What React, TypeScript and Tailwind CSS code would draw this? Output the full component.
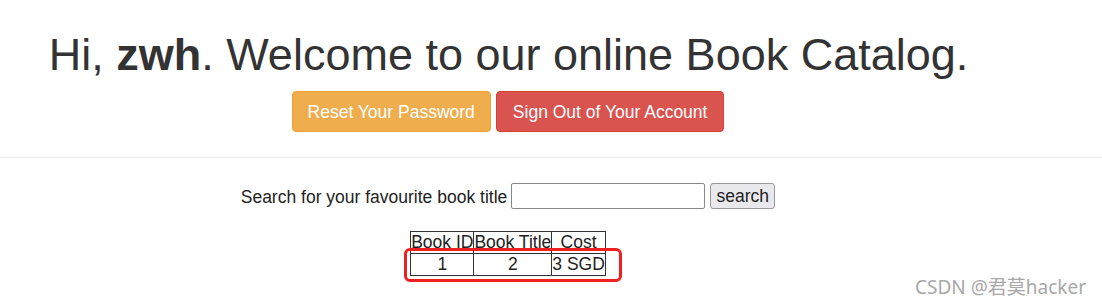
export default function App() {
  return (
    <div className="relative w-[1102px] h-[305px] bg-white overflow-hidden text-[#333] font-['Liberation_Sans',Arial,sans-serif]">
      {/* Header */}
      <div className="w-[1016px] flex flex-col items-center pt-[27px]">
        <h1 className="text-[45px] leading-[56px] pl-[1px]">
          Hi, <b>zwh</b>. Welcome to our online Book Catalog.
        </h1>
        <div className="flex gap-[5px] mt-[8px]">
          <button className="h-[41px] px-[15px] pt-[2px] rounded-[4px] border border-[#eea236] bg-[#f0ad4e] text-white text-[17.5px]">
            Reset Your Password
          </button>
          <button className="h-[41px] px-[16px] pt-[2px] rounded-[4px] border border-[#d43f3a] bg-[#d9534f] text-white text-[17.5px]">
            Sign Out of Your Account
          </button>
        </div>
      </div>
      <div className="mt-[25px] border-t border-[#eee]" />

      {/* Search */}
      <div className="w-[1016px] h-[26px] flex justify-center items-center mt-[25px] text-[17.5px] text-[#222]">
        <span className="mr-[4px] leading-[26px] pt-[2px]">Search for your favourite book title</span>
        <input className="w-[194px] h-[26px] border border-[#888] rounded-[2px] bg-white" />
        <button className="ml-[5px] w-[65px] h-[26px] pt-[1px] border border-[#999] rounded-[3px] bg-[#e9e9ed] text-[17.5px] leading-none">search</button>
      </div>

      {/* Table */}
      <div className="w-[1016px] flex justify-center mt-[22px]">
        <div className="relative">
          <table className="border-collapse text-[17.5px] text-[#222] leading-[21px]">
            <thead>
              <tr>
                <th className="border border-[#333] font-normal px-0">Book ID</th>
                <th className="border border-[#333] font-normal px-0">Book Title</th>
                <th className="border border-[#333] font-normal px-0">Cost</th>
              </tr>
            </thead>
            <tbody>
              <tr>
                <td className="border border-[#333] text-center">1</td>
                <td className="border border-[#333] text-center">2</td>
                <td className="border border-[#333] text-center">3 SGD</td>
              </tr>
            </tbody>
          </table>
          <div className="absolute left-[-6px] top-[17px] w-[218px] h-[34px] border-[3px] border-[#f02020] rounded-[6px]" />
        </div>
      </div>

      {/* Watermark */}
      <div className="absolute right-[16px] bottom-[8px] text-[19px] text-[#a8a8a8] font-['Noto_Sans','Noto_Sans_CJK_SC',sans-serif] leading-none">
        CSDN @君莫hacker
      </div>
    </div>
  );
}
